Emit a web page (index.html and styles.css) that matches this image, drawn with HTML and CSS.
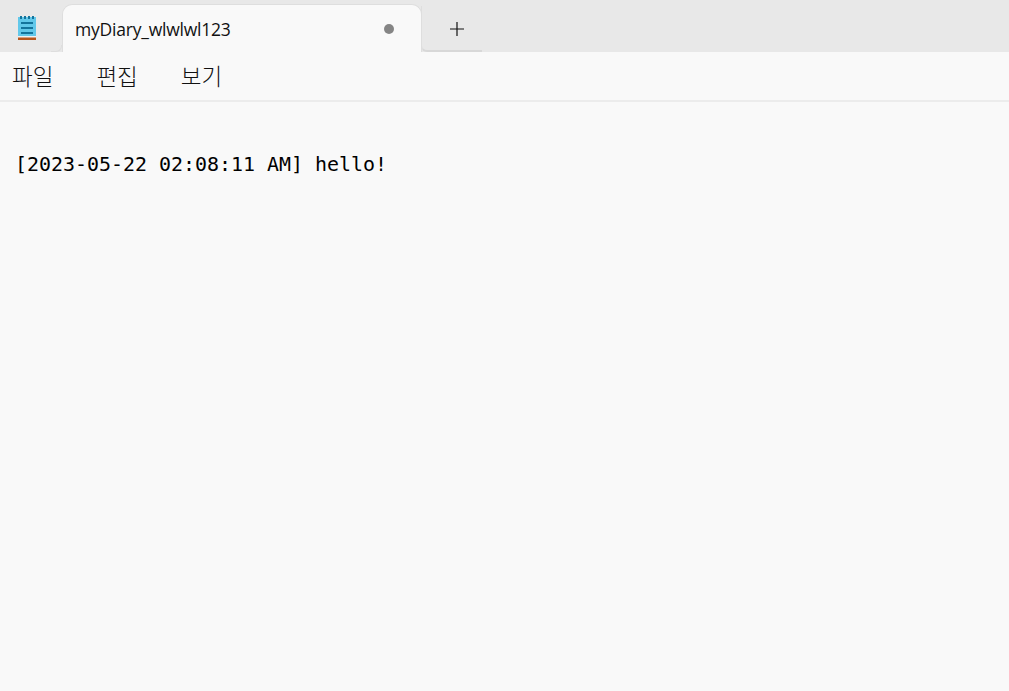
FILE: index.html
```html
<!DOCTYPE html>
<html lang="ko">
<head>
<meta charset="utf-8">
<title>myDiary_wlwlwl123</title>
<link rel="stylesheet" href="styles.css">
</head>
<body>
<div class="app">
  <header class="tabbar">
    <div class="app-icon">
      <svg width="20" height="24" viewBox="0 0 20 24">
        <rect x="1" y="1" width="18" height="20" fill="#62c8ea"/>
        <rect x="1" y="20" width="18" height="1.5" fill="#f0f0f0"/>
        <rect x="1" y="21.5" width="18" height="2.5" fill="#b8561c"/>
        <g fill="#14749c">
          <rect x="3" y="0" width="2" height="3"/>
          <rect x="7" y="0" width="2" height="3"/>
          <rect x="11" y="0" width="2" height="3"/>
          <rect x="15" y="0" width="2" height="3"/>
          <rect x="4" y="6" width="12" height="2"/>
          <rect x="4" y="11" width="12" height="2"/>
          <rect x="4" y="16" width="12" height="2"/>
        </g>
      </svg>
    </div>
    <div class="tab">
      <span class="tab-title">myDiary_wlwlwl123</span>
      <span class="dot"></span>
    </div>
    <div class="new-tab">
      <svg width="16" height="16" viewBox="0 0 16 16">
        <path d="M8 1v14M1 8h14" stroke="#111" stroke-width="1.2" fill="none"/>
      </svg>
    </div>
  </header>
  <nav class="menu">
    <span class="menu-item">파일</span>
    <span class="menu-item">편집</span>
    <span class="menu-item">보기</span>
  </nav>
  <main class="editor">
    <p class="line">[2023-05-22 02:08:11 AM] hello!</p>
  </main>
</div>
</body>
</html>
```
FILE: styles.css
```css
html, body {
  margin: 0;
  height: 100%;
  background: #f9f9f9;
}
.app {
  display: flex;
  flex-direction: column;
  height: 691px;
  overflow: hidden;
}
.tabbar {
  display: flex;
  align-items: flex-end;
  height: 52px;
  background: #e8e8e8;
  flex: none;
}
.app-icon {
  position: relative;
  width: 62px;
  height: 52px;
  padding: 16px 0 0 17px;
  box-sizing: border-box;
  flex: none;
}
.app-icon svg { display: block; }
.app-icon::after {
  content: "";
  position: absolute;
  right: 0;
  bottom: 0;
  box-sizing: border-box;
  width: 11px;
  height: 7px;
  border-right: 1px solid #dedede;
  border-bottom: 1px solid #dedede;
  border-bottom-right-radius: 6px;
}
.tab {
  display: flex;
  align-items: center;
  justify-content: space-between;
  box-sizing: border-box;
  width: 360px;
  height: 48px;
  padding: 0 27px 0 12px;
  background: #f9f9f9;
  border: 1px solid #dedede;
  border-bottom: 0;
  border-radius: 10px 10px 0 0;
  flex: none;
}
.tab-title {
  font: 17.5px "Open Sans", "Noto Sans", sans-serif;
  letter-spacing: -0.22px;
  color: #111;
}
.dot {
  width: 10px;
  height: 10px;
  border-radius: 50%;
  background: #858585;
}
.new-tab {
  display: flex;
  align-items: center;
  justify-content: center;
  box-sizing: border-box;
  width: 61px;
  height: 46px;
  margin-left: -1px;
  padding: 2px 0 0 9px;
  border-left: 1px solid #dedede;
  border-bottom: 2px solid #d8d8d8;
  border-bottom-left-radius: 6px;
  flex: none;
}
.menu {
  display: flex;
  gap: 43px;
  align-items: center;
  box-sizing: border-box;
  height: 50px;
  padding: 0 0 2px 12px;
  background: #f9f9f9;
  border-bottom: 2px solid #ececec;
  flex: none;
}
.menu-item {
  font: 300 22.5px "Noto Sans CJK KR", sans-serif;
  color: #111;
}
.editor {
  flex: 1;
  padding: 49px 15px 0;
  background: #f9f9f9;
}
.line {
  margin: 0;
  font: 19.95px/26px "DejaVu Sans Mono", monospace;
  color: #000;
  white-space: pre;
}
```
